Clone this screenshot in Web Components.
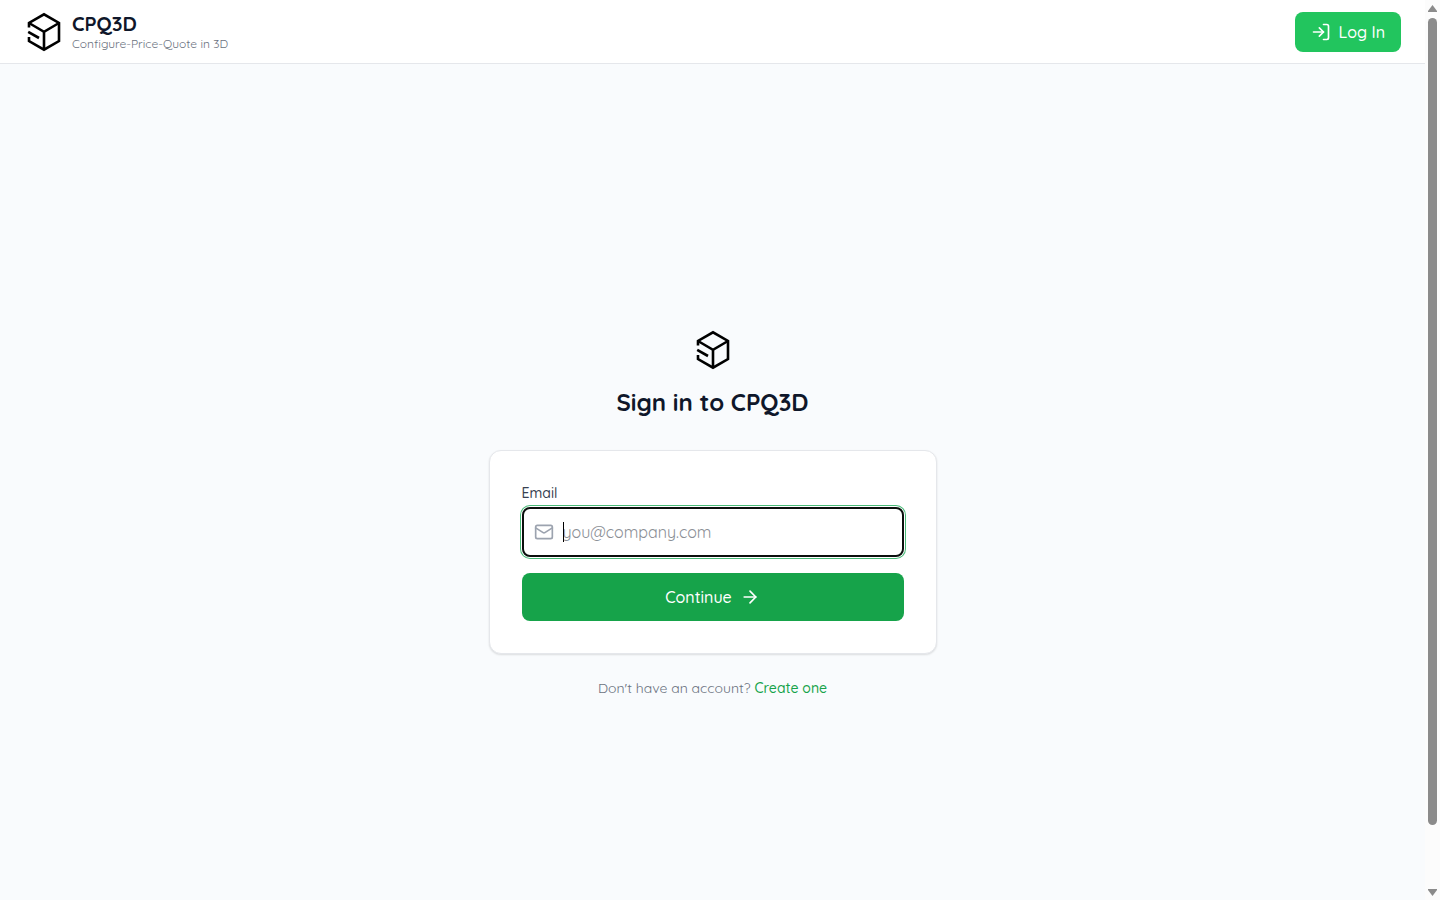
<!DOCTYPE html>
<html lang="en">
<head>
    <meta charset="UTF-8">
    <meta name="viewport" content="width=device-width, initial-scale=1.0">
    <title>Sign in - CPQ3D</title>
    <style>
        * {
            margin: 0;
            padding: 0;
        }
        body {
            font-family: Quicksand, Lato, "Liberation Sans", sans-serif;
            font-size: 16px;
            line-height: 24px;
            color: #0f172a;
            background-color: #f9fbfd;
            overflow: hidden;
        }
    </style>
</head>
<body>
    <cpq-scroll>
        <cpq-header>
            <cpq-button>
                <cpq-icon slot="before" name="login"></cpq-icon>
                Log In
            </cpq-button>
        </cpq-header>
        <cpq-login></cpq-login>
    </cpq-scroll>

    <script>
        class CpqElement extends HTMLElement {
            constructor() {
                super();
                const shadowRoot = this.attachShadow({ mode: "open" });
                shadowRoot.innerHTML = this.render();
            }
        }

        /* cube logo */
        class CpqLogo extends CpqElement {
            render() {
                return `<style>
                    :host {
                        display: block;
                        width: 40px;
                        height: 40px;
                    }
                    svg {
                        display: block;
                    }
                </style>
                <svg viewBox="0 0 40 40" width="40" height="40" fill="none" stroke="#000" stroke-width="2.6" aria-hidden="true">
                    <path d="M5 15.4V11L20 2.3L35 11V29L20 37.7L5 29V25"/>
                    <path d="M5 11L20 19.8L35 11M20 19.8V37.7"/>
                    <path d="M4.2 19.8L15 26"/>
                </svg>`;
            }
        }

        /* 24x24 line icons */
        const ICONS = {
            login: '<path d="M15 3h4a2 2 0 0 1 2 2v14a2 2 0 0 1-2 2h-4"/><path d="M10 17l5-5-5-5"/><path d="M15 12H3"/>',
            mail: '<rect x="2" y="4" width="20" height="16" rx="2"/><path d="M22 7l-8.97 5.7a1.94 1.94 0 0 1-2.06 0L2 7"/>',
            arrow: '<path d="M5 12h14"/><path d="M12 5l7 7-7 7"/>'
        };
        class CpqIcon extends CpqElement {
            render() {
                return `<style>
                    :host {
                        display: block;
                        flex: none;
                        width: 20px;
                        height: 20px;
                    }
                    svg {
                        display: block;
                    }
                </style>
                <svg viewBox="0 0 24 24" width="20" height="20" fill="none" stroke="currentColor"
                    stroke-width="2" stroke-linecap="round" stroke-linejoin="round" aria-hidden="true"></svg>`;
            }
            connectedCallback() {
                this.shadowRoot.querySelector("svg").innerHTML = ICONS[this.getAttribute("name")] || "";
            }
        }

        class CpqButton extends CpqElement {
            render() {
                return `<style>
                    :host {
                        display: block;
                    }
                    button {
                        display: flex;
                        align-items: center;
                        justify-content: center;
                        gap: 8px;
                        width: 100%;
                        padding: 8px 16px;
                        border: none;
                        border-radius: 8px;
                        font: inherit;
                        font-weight: 500;
                        color: #fff;
                        background-color: #22c55e;
                        cursor: pointer;
                    }
                    :host([block]) button {
                        padding: 12px 16px;
                        background-color: #16a34a;
                    }
                </style>
                <button type="button">
                    <slot name="before"></slot>
                    <span><slot></slot></span>
                    <slot name="after"></slot>
                </button>`;
            }
        }

        class CpqHeader extends CpqElement {
            render() {
                return `<style>
                    :host {
                        display: block;
                    }
                    header {
                        display: flex;
                        align-items: center;
                        justify-content: space-between;
                        box-sizing: border-box;
                        height: 64px;
                        padding: 0 24px;
                        background-color: #fff;
                        border-bottom: 1px solid #e5e7eb;
                    }
                    .brand {
                        display: flex;
                        align-items: center;
                        gap: 8px;
                        color: inherit;
                        text-decoration: none;
                    }
                    .name {
                        display: block;
                        font-size: 20px;
                        font-weight: 700;
                    }
                    .tagline {
                        display: block;
                        font-size: 12px;
                        line-height: 16px;
                        color: #6b7280;
                    }
                </style>
                <header>
                    <a class="brand" href="#">
                        <cpq-logo></cpq-logo>
                        <span>
                            <span class="name">CPQ3D</span>
                            <span class="tagline">Configure-Price-Quote in 3D</span>
                        </span>
                    </a>
                    <slot></slot>
                </header>`;
            }
        }

        /* email field, shown focused when the page opens */
        class CpqField extends CpqElement {
            render() {
                return `<style>
                    :host {
                        display: block;
                    }
                    label {
                        display: block;
                        margin-bottom: 4px;
                        font-size: 14px;
                        line-height: 20px;
                        font-weight: 500;
                        color: #374151;
                    }
                    .box {
                        display: flex;
                        align-items: center;
                        gap: 9px;
                        height: 46px;
                        padding: 0 10px;
                        border: 2px solid #0b0f0d;
                        border-radius: 8px;
                        background-color: #fff;
                        box-shadow: 0 0 0 1px #fff, 0 0 0 2px #4abb79;
                    }
                    cpq-icon {
                        color: #9ca3af;
                    }
                    .entry {
                        position: relative;
                        flex: 1;
                        display: flex;
                    }
                    input {
                        flex: 1;
                        min-width: 0;
                        padding: 0;
                        border: none;
                        outline: none;
                        font: inherit;
                        color: #0f172a;
                        background: none;
                        caret-color: transparent;
                    }
                    input::placeholder {
                        color: #8b8f96;
                        opacity: 1;
                    }
                    .caret {
                        position: absolute;
                        left: 0;
                        top: 2px;
                        width: 1px;
                        height: 20px;
                        background-color: #000;
                    }
                    input:not(:placeholder-shown) {
                        caret-color: auto;
                    }
                    input:not(:placeholder-shown) + .caret {
                        display: none;
                    }
                </style>
                <label for="email">Email</label>
                <div class="box">
                    <cpq-icon name="mail"></cpq-icon>
                    <span class="entry">
                        <input id="email" type="email" placeholder="you@company.com">
                        <span class="caret"></span>
                    </span>
                </div>`;
            }
        }

        class CpqCard extends CpqElement {
            render() {
                return `<style>
                    :host {
                        display: grid;
                        gap: 16px;
                        padding: 32px;
                        border: 1px solid #e5e7eb;
                        border-radius: 12px;
                        background-color: #fff;
                        box-shadow: 0 1px 2px rgb(0 0 0 / 12%);
                    }
                </style>
                <slot></slot>`;
            }
        }

        class CpqLogin extends CpqElement {
            render() {
                return `<style>
                    :host {
                        display: flex;
                        align-items: center;
                        justify-content: center;
                        min-height: 100vh;
                    }
                    main {
                        width: 100%;
                        max-width: 448px;
                    }
                    cpq-logo {
                        margin: 0 auto 16px;
                    }
                    h1 {
                        margin: 0 0 32px;
                        font-size: 24px;
                        line-height: 32px;
                        font-weight: 700;
                        text-align: center;
                    }
                    p {
                        margin: 24px 0 0;
                        font-size: 14px;
                        line-height: 20px;
                        text-align: center;
                        color: #6b7280;
                    }
                    a {
                        font-weight: 500;
                        color: #16a34a;
                        text-decoration: none;
                    }
                </style>
                <main>
                    <cpq-logo></cpq-logo>
                    <h1>Sign in to CPQ3D</h1>
                    <cpq-card>
                        <cpq-field></cpq-field>
                        <cpq-button block>
                            Continue
                            <cpq-icon slot="after" name="arrow"></cpq-icon>
                        </cpq-button>
                    </cpq-card>
                    <p>Don't have an account? <a href="#">Create one</a></p>
                </main>`;
            }
        }

        /* scrolling page with its own scroll bar */
        class CpqScroll extends CpqElement {
            render() {
                return `<style>
                    :host {
                        display: flex;
                        height: 100vh;
                    }
                    .view {
                        flex: 1;
                        min-width: 0;
                        overflow-y: auto;
                        scrollbar-width: none;
                    }
                    .bar {
                        display: flex;
                        flex-direction: column;
                        align-items: center;
                        justify-content: space-between;
                        box-sizing: border-box;
                        width: 15px;
                        padding: 5px 0 4px;
                        background-color: #fcfcfc;
                    }
                    .bar svg {
                        display: block;
                        fill: #8b8b8b;
                    }
                    .track {
                        flex: 1;
                        width: 9px;
                        margin: 6px 0;
                    }
                    .thumb {
                        border-radius: 5px;
                        background-color: #8b8b8b;
                    }
                </style>
                <div class="view"><slot></slot></div>
                <div class="bar" aria-hidden="true">
                    <svg width="9" height="7" viewBox="0 0 9 7"><path d="M4.5 0L9 6V7H0V6Z"/></svg>
                    <div class="track"><div class="thumb"></div></div>
                    <svg width="9" height="7" viewBox="0 0 9 7"><path d="M4.5 7L9 1V0H0V1Z"/></svg>
                </div>`;
            }
            connectedCallback() {
                this.view = this.shadowRoot.querySelector(".view");
                this.view.addEventListener("scroll", () => this.update());
                window.addEventListener("resize", () => this.update());
            }
            update() {
                const track = this.shadowRoot.querySelector(".track");
                const thumb = this.shadowRoot.querySelector(".thumb");
                const ratio = track.clientHeight / this.view.scrollHeight;
                thumb.style.height = Math.floor(this.view.clientHeight * ratio) + "px";
                thumb.style.transform = `translateY(${Math.round(this.view.scrollTop * ratio)}px)`;
            }
        }

        window.customElements.define("cpq-logo", CpqLogo);
        window.customElements.define("cpq-icon", CpqIcon);
        window.customElements.define("cpq-button", CpqButton);
        window.customElements.define("cpq-header", CpqHeader);
        window.customElements.define("cpq-field", CpqField);
        window.customElements.define("cpq-card", CpqCard);
        window.customElements.define("cpq-login", CpqLogin);
        window.customElements.define("cpq-scroll", CpqScroll);

        document.querySelector("cpq-scroll").update();
    </script>
</body>
</html>
